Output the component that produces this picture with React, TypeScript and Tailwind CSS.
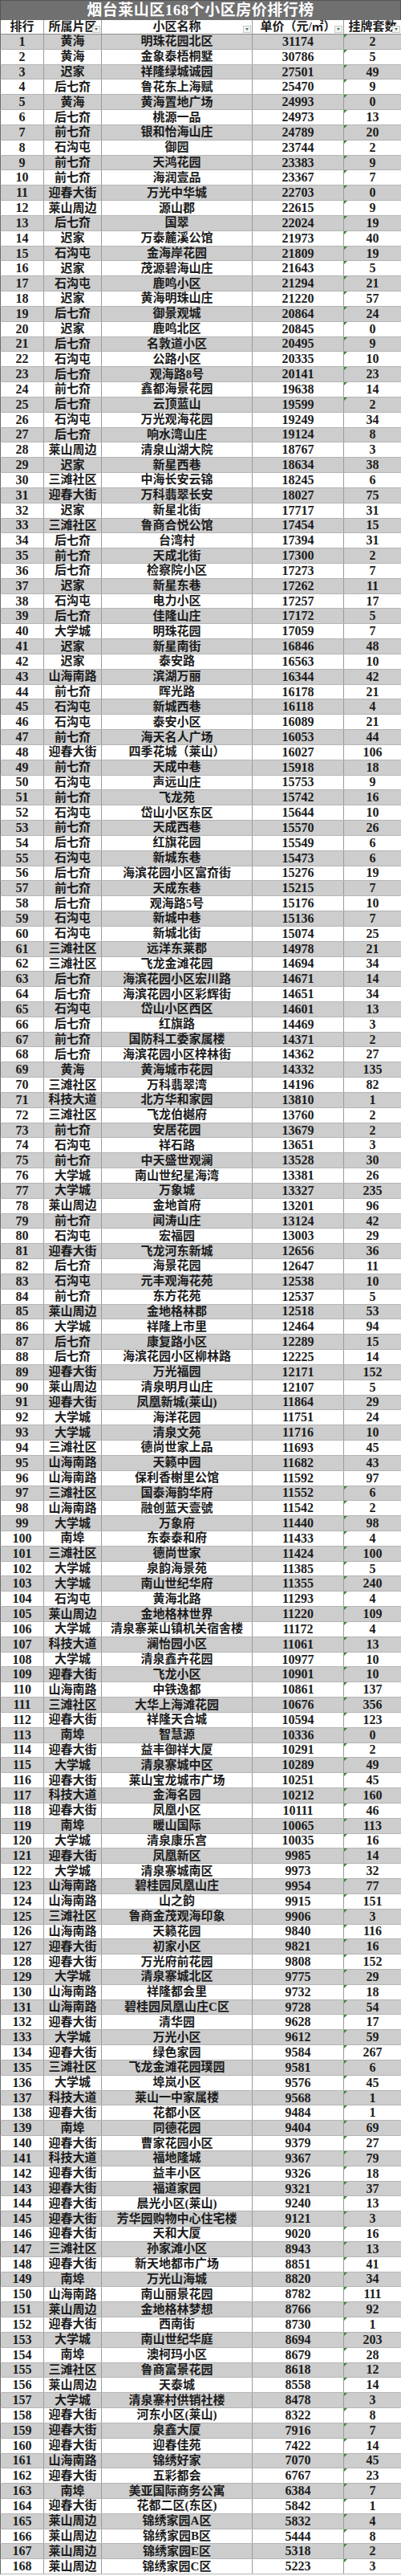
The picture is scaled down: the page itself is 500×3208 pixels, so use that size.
import React from 'react'

type Row = [number, string, string, number, number]

const rows: Row[] = [
  [1, '黄海', '明珠花园北区', 31174, 2],
  [2, '黄海', '金象泰梧桐墅', 30786, 5],
  [3, '迟家', '祥隆绿城诚园', 27501, 49],
  [4, '后七夼', '鲁花东上海赋', 25470, 9],
  [5, '黄海', '黄海置地广场', 24993, 0],
  [6, '后七夼', '桃源一品', 24973, 13],
  [7, '前七夼', '银和怡海山庄', 24789, 20],
  [8, '石沟屯', '御园', 23744, 2],
  [9, '前七夼', '天鸿花园', 23383, 9],
  [10, '前七夼', '海润壹品', 23367, 7],
  [11, '迎春大街', '万光中华城', 22703, 0],
  [12, '莱山周边', '源山郡', 22615, 9],
  [13, '后七夼', '国翠', 22024, 19],
  [14, '迟家', '万泰麓溪公馆', 21973, 40],
  [15, '石沟屯', '金海岸花园', 21809, 19],
  [16, '迟家', '茂源碧海山庄', 21643, 5],
  [17, '石沟屯', '鹿鸣小区', 21294, 21],
  [18, '迟家', '黄海明珠山庄', 21220, 57],
  [19, '后七夼', '御景观城', 20864, 24],
  [20, '迟家', '鹿鸣北区', 20845, 0],
  [21, '后七夼', '名敦道小区', 20495, 9],
  [22, '石沟屯', '公路小区', 20335, 10],
  [23, '后七夼', '观海路8号', 20141, 23],
  [24, '前七夼', '鑫都海景花园', 19638, 14],
  [25, '后七夼', '云顶蓝山', 19599, 2],
  [26, '石沟屯', '万光观海花园', 19249, 34],
  [27, '后七夼', '响水湾山庄', 19124, 8],
  [28, '莱山周边', '清泉山湖大院', 18767, 3],
  [29, '迟家', '新星西巷', 18634, 38],
  [30, '三滩社区', '中海长安云锦', 18245, 6],
  [31, '迎春大街', '万科翡翠长安', 18027, 75],
  [32, '迟家', '新星北街', 17717, 31],
  [33, '三滩社区', '鲁商合悦公馆', 17454, 15],
  [34, '后七夼', '台湾村', 17394, 31],
  [35, '前七夼', '天成北街', 17300, 2],
  [36, '后七夼', '检察院小区', 17273, 7],
  [37, '迟家', '新星东巷', 17262, 11],
  [38, '石沟屯', '电力小区', 17257, 17],
  [39, '后七夼', '佳隆山庄', 17172, 5],
  [40, '大学城', '明珠花园', 17059, 7],
  [41, '迟家', '新星南街', 16846, 48],
  [42, '迟家', '泰安路', 16563, 10],
  [43, '山海南路', '滨湖万丽', 16344, 42],
  [44, '前七夼', '晖光路', 16178, 21],
  [45, '石沟屯', '新城西巷', 16118, 4],
  [46, '石沟屯', '泰安小区', 16089, 21],
  [47, '前七夼', '海天名人广场', 16053, 44],
  [48, '迎春大街', '四季花城（莱山）', 16027, 106],
  [49, '前七夼', '天成中巷', 15918, 18],
  [50, '石沟屯', '声远山庄', 15753, 9],
  [51, '前七夼', '飞龙苑', 15742, 16],
  [52, '石沟屯', '岱山小区东区', 15644, 10],
  [53, '前七夼', '天成西巷', 15570, 26],
  [54, '后七夼', '红旗花园', 15549, 6],
  [55, '石沟屯', '新城东巷', 15473, 6],
  [56, '后七夼', '海滨花园小区富夼街', 15276, 19],
  [57, '前七夼', '天成东巷', 15215, 7],
  [58, '后七夼', '观海路5号', 15176, 10],
  [59, '石沟屯', '新城中巷', 15136, 7],
  [60, '石沟屯', '新城北街', 15074, 25],
  [61, '三滩社区', '远洋东莱郡', 14978, 21],
  [62, '三滩社区', '飞龙金滩花园', 14694, 34],
  [63, '后七夼', '海滨花园小区宏川路', 14671, 14],
  [64, '后七夼', '海滨花园小区彩辉街', 14651, 34],
  [65, '石沟屯', '岱山小区西区', 14601, 13],
  [66, '后七夼', '红旗路', 14469, 3],
  [67, '前七夼', '国防科工委家属楼', 14371, 2],
  [68, '后七夼', '海滨花园小区梓林街', 14362, 27],
  [69, '黄海', '黄海城市花园', 14332, 135],
  [70, '三滩社区', '万科翡翠湾', 14196, 82],
  [71, '科技大道', '北方华和家园', 13810, 1],
  [72, '三滩社区', '飞龙伯樾府', 13760, 2],
  [73, '前七夼', '安居花园', 13679, 2],
  [74, '石沟屯', '祥石路', 13651, 3],
  [75, '前七夼', '中天盛世观澜', 13528, 30],
  [76, '大学城', '南山世纪星海湾', 13381, 26],
  [77, '大学城', '万象城', 13327, 235],
  [78, '莱山周边', '金地首府', 13201, 96],
  [79, '前七夼', '闻涛山庄', 13124, 42],
  [80, '石沟屯', '宏福园', 13003, 29],
  [81, '迎春大街', '飞龙河东新城', 12656, 36],
  [82, '后七夼', '海景花园', 12647, 11],
  [83, '石沟屯', '元丰观海花苑', 12538, 10],
  [84, '前七夼', '东方花苑', 12537, 5],
  [85, '莱山周边', '金地格林郡', 12518, 53],
  [86, '大学城', '祥隆上市里', 12464, 94],
  [87, '后七夼', '康复路小区', 12289, 15],
  [88, '后七夼', '海滨花园小区柳林路', 12225, 14],
  [89, '迎春大街', '万光福园', 12171, 152],
  [90, '莱山周边', '清泉明月山庄', 12107, 5],
  [91, '迎春大街', '凤凰新城(莱山)', 11864, 29],
  [92, '大学城', '海洋花园', 11751, 24],
  [93, '大学城', '清泉文苑', 11716, 10],
  [94, '三滩社区', '德尚世家上品', 11693, 45],
  [95, '山海南路', '天籁中园', 11682, 43],
  [96, '山海南路', '保利香榭里公馆', 11592, 97],
  [97, '三滩社区', '国泰海韵华府', 11552, 6],
  [98, '山海南路', '融创蓝天壹號', 11542, 2],
  [99, '大学城', '万象府', 11440, 98],
  [100, '南埠', '东泰泰和府', 11433, 4],
  [101, '三滩社区', '德尚世家', 11424, 100],
  [102, '大学城', '泉韵海景苑', 11385, 5],
  [103, '大学城', '南山世纪华府', 11355, 240],
  [104, '石沟屯', '黄海北路', 11293, 4],
  [105, '莱山周边', '金地格林世界', 11220, 109],
  [106, '大学城', '清泉寨莱山镇机关宿舍楼', 11172, 4],
  [107, '科技大道', '澜怡园小区', 11061, 13],
  [108, '大学城', '清泉鑫卉花园', 10977, 10],
  [109, '迎春大街', '飞龙小区', 10901, 10],
  [110, '山海南路', '中铁逸都', 10861, 137],
  [111, '三滩社区', '大华上海滩花园', 10676, 356],
  [112, '迎春大街', '祥隆天合城', 10594, 123],
  [113, '南埠', '智慧源', 10336, 0],
  [114, '迎春大街', '益丰御祥大厦', 10291, 2],
  [115, '大学城', '清泉寨城中区', 10289, 49],
  [116, '迎春大街', '莱山宝龙城市广场', 10251, 45],
  [117, '科技大道', '金海名园', 10212, 160],
  [118, '迎春大街', '凤凰小区', 10111, 46],
  [119, '南埠', '暖山国际', 10065, 113],
  [120, '大学城', '清泉康乐宫', 10035, 16],
  [121, '迎春大街', '凤凰新区', 9985, 14],
  [122, '大学城', '清泉寨城南区', 9973, 32],
  [123, '山海南路', '碧桂园凤凰山庄', 9954, 77],
  [124, '山海南路', '山之韵', 9915, 151],
  [125, '三滩社区', '鲁商金茂观海印象', 9906, 3],
  [126, '山海南路', '天籁花园', 9840, 116],
  [127, '迎春大街', '初家小区', 9821, 16],
  [128, '迎春大街', '万光府前花园', 9808, 152],
  [129, '大学城', '清泉寨城北区', 9775, 29],
  [130, '山海南路', '祥隆都会里', 9732, 18],
  [131, '山海南路', '碧桂园凤凰山庄C区', 9728, 54],
  [132, '迎春大街', '清华园', 9628, 17],
  [133, '大学城', '万光小区', 9612, 59],
  [134, '迎春大街', '绿色家园', 9584, 267],
  [135, '三滩社区', '飞龙金滩花园璞园', 9581, 6],
  [136, '大学城', '埠岚小区', 9576, 45],
  [137, '科技大道', '莱山一中家属楼', 9568, 1],
  [138, '迎春大街', '花都小区', 9484, 1],
  [139, '南埠', '同德花园', 9404, 69],
  [140, '迎春大街', '曹家花园小区', 9379, 27],
  [141, '科技大道', '福地隆城', 9367, 79],
  [142, '迎春大街', '益丰小区', 9326, 18],
  [143, '迎春大街', '福道家园', 9321, 37],
  [144, '迎春大街', '晨光小区(莱山)', 9240, 13],
  [145, '迎春大街', '芳华园购物中心住宅楼', 9121, 3],
  [146, '迎春大街', '天和大厦', 9020, 16],
  [147, '三滩社区', '孙家滩小区', 8943, 13],
  [148, '迎春大街', '新天地都市广场', 8851, 41],
  [149, '南埠', '万光山海城', 8820, 34],
  [150, '山海南路', '南山丽景花园', 8782, 111],
  [151, '莱山周边', '金地格林梦想', 8766, 92],
  [152, '迎春大街', '西南街', 8730, 1],
  [153, '大学城', '南山世纪华庭', 8694, 203],
  [154, '南埠', '澳柯玛小区', 8679, 28],
  [155, '三滩社区', '鲁商富景花园', 8618, 12],
  [156, '莱山周边', '天泰城', 8558, 14],
  [157, '大学城', '清泉寨村供销社楼', 8478, 3],
  [158, '迎春大街', '河东小区(莱山)', 8322, 8],
  [159, '迎春大街', '泉鑫大厦', 7916, 7],
  [160, '迎春大街', '迎春佳苑', 7422, 14],
  [161, '山海南路', '锦绣好家', 7070, 45],
  [162, '迎春大街', '五彩都会', 6767, 23],
  [163, '南埠', '美亚国际商务公寓', 6384, 7],
  [164, '迎春大街', '花都二区(东区)', 5842, 1],
  [165, '莱山周边', '锦绣家园A区', 5832, 4],
  [166, '莱山周边', '锦绣家园B区', 5444, 8],
  [167, '莱山周边', '锦绣家园E区', 5318, 2],
  [168, '莱山周边', '锦绣家园C区', 5223, 3],
]

const font = { fontFamily: '"Liberation Serif", "Noto Sans CJK SC", serif' }

function FilterButton() {
  return (
    <span className="absolute bottom-[1px] right-[1px] flex h-[9px] w-[10px] items-center justify-center border border-[#c8c8c8] bg-[#f4f4f4]">
      <span className="h-0 w-0 border-x-[2.5px] border-t-[3px] border-x-transparent border-t-[#3b7a57]" />
    </span>
  )
}

function HeaderCell({ label, filter, last }: { label: string; filter?: boolean; last?: boolean }) {
  return (
    <div
      className={
        'relative flex items-center justify-center overflow-hidden whitespace-nowrap border-b border-[#8d8d8d] ' +
        (last ? 'border-r border-r-[#6b6b6b]' : 'border-r border-r-[#9a9a9a]')
      }
    >
      {label}
      {filter && <FilterButton />}
    </div>
  )
}

export default function App() {
  return (
    <div className="w-[500px] bg-white text-[#1c1c1c]" style={font}>
      <div className="flex h-[25px] items-center justify-center border-x border-t border-[#555] bg-[#707070] text-[19px] font-bold tracking-[0.5px] text-white">
        烟台莱山区168个小区房价排行榜
      </div>

      <div className="grid h-[18px] grid-cols-[54px_72px_188px_114px_72px] border-l border-[#6b6b6b] text-[15px] font-bold leading-none">
        <HeaderCell label="排行" />
        <HeaderCell label="所属片区" filter />
        <HeaderCell label="小区名称" filter />
        <HeaderCell label="单价（元/㎡）" filter />
        <HeaderCell label="挂牌套数" filter last />
      </div>

      {rows.map(([rank, area, name, price, count]) => (
        <div
          key={rank}
          className={
            'grid h-[18.83px] grid-cols-[54px_72px_188px_114px_72px] border-b border-l border-[#b5b5b5] border-l-[#6b6b6b] text-[15px] font-bold leading-none ' +
            (rank % 2 === 1 ? 'bg-[#cdcdcd]' : 'bg-white')
          }
        >
          <div className="flex items-center justify-center border-r border-[#9a9a9a] text-[16px]">{rank}</div>
          <div className="flex items-center justify-center whitespace-nowrap border-r border-[#9a9a9a]">{area}</div>
          <div className="flex items-center justify-center whitespace-nowrap border-r border-[#9a9a9a]">{name}</div>
          <div className="flex items-center justify-center border-r border-[#9a9a9a] text-[16px]">{price}</div>
          <div className="relative flex items-center justify-center border-r border-[#6b6b6b] text-[16px]">
            {(rank <= 25 || rank >= 97) && (
              <span className="absolute left-0 top-0 h-0 w-0 border-r-[4px] border-t-[4px] border-r-transparent border-t-[#2f8f2f]" />
            )}
            {count}
          </div>
        </div>
      ))}
    </div>
  )
}
